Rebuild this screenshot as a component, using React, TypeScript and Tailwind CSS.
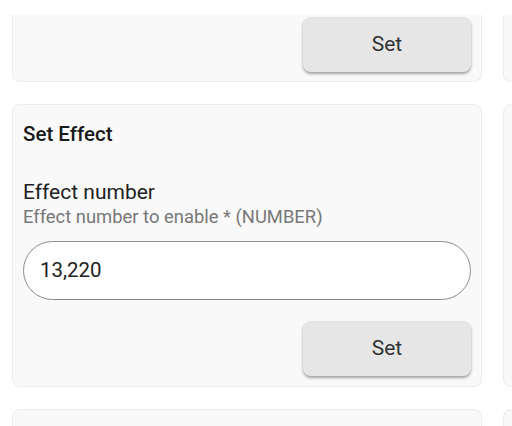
import React from "react";

function SetButton() {
  return (
    <button className="w-[168px] h-[55px] rounded-[8px] bg-[#e6e6e6] text-[21px] text-[#333333] shadow-[0_2px_3px_rgba(0,0,0,0.35)]">
      Set
    </button>
  );
}

export default function App() {
  return (
    <div
      className="w-[512px] h-[426px] overflow-hidden bg-white"
      style={{ fontFamily: "Roboto, 'Noto Sans', sans-serif" }}
    >
      <div className="pt-[15px] pl-[12px] grid grid-cols-[470px_470px] gap-x-[21px] gap-y-[22px]">
        <div className="bg-[#f9f9f9] border-x border-b border-[#ececec] rounded-b-[8px] pt-[2px] pb-[9px] px-[10px] flex justify-end">
          <SetButton />
        </div>
        <div className="bg-[#f9f9f9] border-x border-b border-[#ececec] rounded-b-[8px] h-[67px]" />

        <div className="bg-[#f9f9f9] border border-[#ececec] rounded-[8px] p-[10px] flex flex-col">
          <div className="mt-[5px] text-[20.5px] leading-[28px] font-medium text-[#1a1a1a]">Set Effect</div>
          <div className="mt-[31px] text-[21px] leading-[26px] text-[#212121]">Effect number</div>
          <div className="mt-[1px] text-[18.4px] leading-[22px] text-[#777777]">Effect number to enable * (NUMBER)</div>
          <div className="mt-[13px] h-[59px] rounded-full border border-[#8c8c8c] bg-white flex items-center px-[16px] text-[20.5px] text-[#212121]">
            13,220
          </div>
          <div className="mt-[21px] flex justify-end">
            <SetButton />
          </div>
        </div>
        <div className="bg-[#f9f9f9] border border-[#ececec] rounded-[8px]" />

        <div className="bg-[#f9f9f9] border border-[#ececec] rounded-[8px] h-[200px]" />
        <div className="bg-[#f9f9f9] border border-[#ececec] rounded-[8px] h-[200px]" />
      </div>
    </div>
  );
}
